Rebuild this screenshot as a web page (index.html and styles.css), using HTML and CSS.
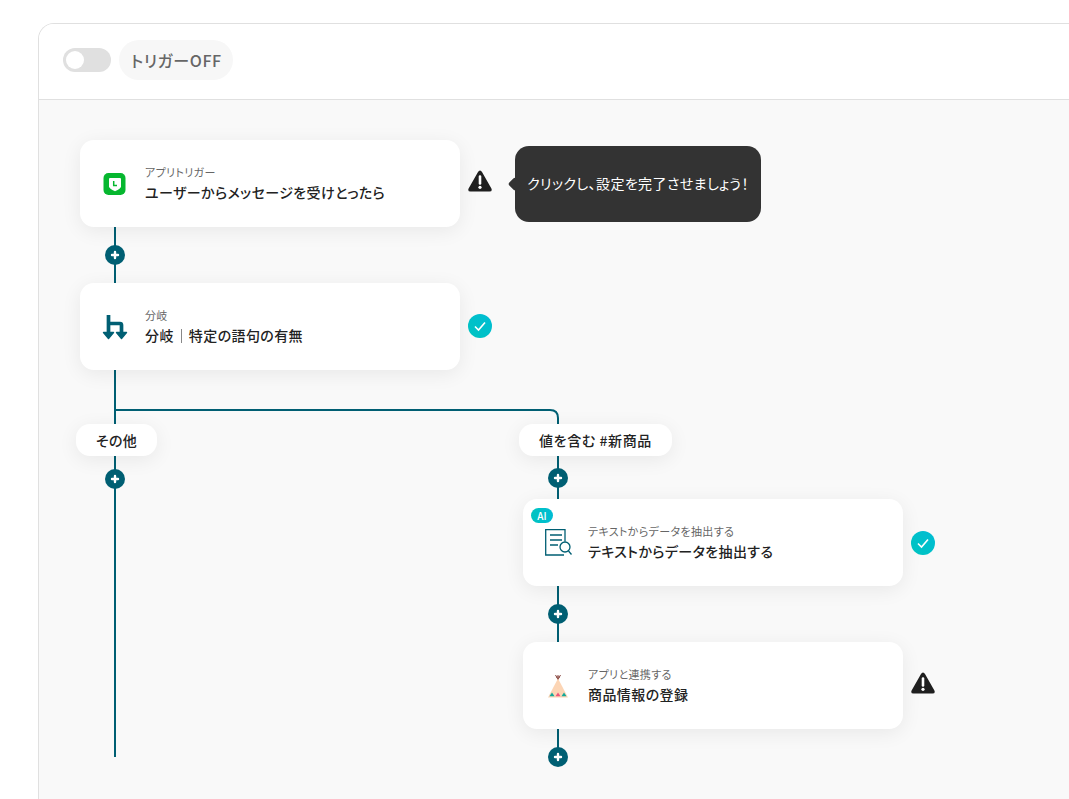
FILE: index.html
```html
<!DOCTYPE html>
<html lang="ja">
<head>
<meta charset="utf-8">
<title>フロー</title>
<link rel="stylesheet" href="styles.css">
</head>
<body>
<main class="panel">
  <header class="panel-head">
    <span class="toggle"><span class="toggle-knob"></span></span>
    <span class="status-pill">トリガーOFF</span>
  </header>
  <section class="canvas">
    <svg class="wires" width="1030" height="699" viewBox="39 100 1030 699" fill="none">
      <defs>
        <g id="plus">
          <circle r="10" fill="#005f73"/>
          <path d="M-3 0H3M0-3V3" stroke="#fff" stroke-width="2.400" stroke-linecap="round"/>
        </g>
        <linearGradient id="checkfill" x1="0" y1="1" x2="1" y2="0">
          <stop offset="0" stop-color="#00c4c0"/>
          <stop offset="1" stop-color="#00bcd4"/>
        </linearGradient>
      </defs>
      <g stroke="#005f73" stroke-width="2">
        <path d="M115 227V757"/>
        <path d="M115 410H550Q558 410 558 418V757"/>
      </g>
      <use href="#plus" x="115" y="255"/>
      <use href="#plus" x="115" y="479"/>
      <use href="#plus" x="558" y="478"/>
      <use href="#plus" x="558" y="614"/>
      <use href="#plus" x="558" y="757"/>
    </svg>

    <article class="card card-line">
      <svg class="card-icon icon-line" width="25" height="25" viewBox="0 0 25 25">
        <rect x="1.500" y="1" width="22" height="22" rx="5" fill="#06b72f"/>
        <path d="M7 7Q7 6 8 6H18Q19 6 19 7V14.500Q19 16.500 13 19.300Q7 16.500 7 14.500Z" fill="#fff"/>
        <path d="M11.700 9V13.600H15" stroke="#06b72f" stroke-width="1.500" fill="none"/>
      </svg>
      <div class="card-text">
        <p class="card-label">アプリトリガー</p>
        <p class="card-title">ユーザーからメッセージを受けとったら</p>
      </div>
    </article>

    <svg class="status status-1" width="24" height="24" viewBox="0 0 24 24">
      <path d="M12 1.500Q13.200 1.500 14 3L23.400 19.500Q24.600 22.500 21.500 22.500H2.500Q-.6 22.500.6 19.500L10 3Q10.800 1.500 12 1.500Z" fill="#1f1f1f"/>
      <path d="M12 7.500V14.500" stroke="#fff" stroke-width="2.600" stroke-linecap="round"/>
      <circle cx="12" cy="18.300" r="1.600" fill="#fff"/>
    </svg>

    <div class="tooltip">クリックし、設定を完了させましょう！</div>

    <article class="card card-branch">
      <svg class="card-icon" width="26" height="28" viewBox="0 0 26 28" fill="none">
        <path d="M6.500 2V19M6.500 10.500H18Q19.500 10.500 19.500 12V19" stroke="#005f73" stroke-width="3.700"/>
        <path d="M1.500 19.500H11.500L6.500 25.500ZM14.500 19.500H24.500L19.500 25.500Z" fill="#005f73" stroke="#005f73" stroke-width="1.400" stroke-linejoin="round"/>
      </svg>
      <div class="card-text">
        <p class="card-label">分岐</p>
        <p class="card-title">分岐<span class="sep"></span>特定の語句の有無</p>
      </div>
    </article>

    <svg class="status status-2" width="24" height="24" viewBox="0 0 24 24" fill="none">
      <circle cx="12" cy="12" r="12" fill="url(#checkfill)"/>
      <path d="M7 12.500L10.500 16L17 8.500" stroke="#fff" stroke-width="1.600"/>
    </svg>

    <div class="pill pill-other">その他</div>
    <div class="pill pill-match">値を含む #新商品</div>

    <article class="card card-ai">
      <span class="ai-badge">AI</span>
      <svg class="card-icon" width="28" height="28" viewBox="0 0 28 28" fill="none" stroke="#005f73" stroke-width="1.300">
        <path d="M20 12.500V.7H.7V26H19"/>
        <path d="M5 6H17M5 11H17M5 16H13"/>
        <circle cx="20" cy="18" r="5" fill="#fff"/>
        <path d="M23.500 22L26.500 25.500"/>
      </svg>
      <div class="card-text">
        <p class="card-label">テキストからデータを抽出する</p>
        <p class="card-title">テキストからデータを抽出する</p>
      </div>
    </article>

    <svg class="status status-3" width="24" height="24" viewBox="0 0 24 24" fill="none">
      <circle cx="12" cy="12" r="12" fill="url(#checkfill)"/>
      <path d="M7 12.500L10.500 16L17 8.500" stroke="#fff" stroke-width="1.600"/>
    </svg>

    <article class="card card-app">
      <svg class="card-icon" width="26" height="28" viewBox="0 0 26 28" fill="none">
        <path d="M10.500 3L13 7.500L15.500 3M13 3V7.500M11 5H15" stroke="#8a4b45" stroke-width="1"/>
        <path d="M13 6.500L23 25.500H3Z" fill="#fcd5b5"/>
        <path d="M4.500 24.300L7 20.500L9.500 24.300Z" fill="#11a99a"/>
        <path d="M10.500 24.300L13 20.500L15.500 24.300Z" fill="#f0567a"/>
        <path d="M16.500 24.300L19 20.500L21.500 24.300Z" fill="#11a99a"/>
      </svg>
      <div class="card-text">
        <p class="card-label">アプリと連携する</p>
        <p class="card-title">商品情報の登録</p>
      </div>
    </article>

    <svg class="status status-4" width="24" height="24" viewBox="0 0 24 24">
      <path d="M12 1.500Q13.200 1.500 14 3L23.400 19.500Q24.600 22.500 21.500 22.500H2.500Q-.6 22.500.6 19.500L10 3Q10.800 1.500 12 1.500Z" fill="#1f1f1f"/>
      <path d="M12 7.500V14.500" stroke="#fff" stroke-width="2.600" stroke-linecap="round"/>
      <circle cx="12" cy="18.300" r="1.600" fill="#fff"/>
    </svg>
  </section>
</main>
</body>
</html>
```

FILE: styles.css
```css
* { box-sizing: border-box; }
html, body { margin: 0; height: 100%; overflow: hidden; background: #fff; }
body {
  font-family: "Noto Sans CJK JP", "Noto Sans", sans-serif;
  font-feature-settings: "palt";
  color: #222;
  padding: 23px 0 0 38px;
}
.panel {
  height: 100%;
  border: solid #e0e0e0;
  border-width: 1px 0 0 1px;
  border-radius: 16px 0 0 0;
  display: flex;
  flex-direction: column;
  overflow: hidden;
}
.panel-head {
  flex: 0 0 76px;
  display: flex;
  align-items: center;
  gap: 8px;
  padding: 0 0 3px 24px;
  background: #fff;
  border-bottom: 1px solid #e0e0e0;
}
.toggle {
  width: 48px;
  height: 24px;
  border-radius: 12px;
  background: #e0e0e0;
  padding: 3px;
}
.toggle-knob {
  display: block;
  width: 18px;
  height: 18px;
  border-radius: 50%;
  background: #fff;
}
.status-pill {
  height: 40px;
  padding: 0 11px 0 12px;
  border-radius: 20px;
  background: #f7f7f7;
  color: #666;
  font-size: 16px;
  font-weight: 500;
  letter-spacing: .57px;
  line-height: 40px;
}
.canvas {
  position: relative;
  flex: 1;
  background: #f9f9f9;
}
.wires { position: absolute; left: 0; top: 0; }
.card {
  position: absolute;
  width: 380px;
  height: 87px;
  display: flex;
  align-items: center;
  background: #fff;
  border-radius: 14px;
  box-shadow: 0 4px 20px rgba(0, 0, 0, .07);
}
.card-line { left: 41px; top: 40px; }
.card-branch { left: 41px; top: 183px; }
.card-ai { left: 484px; top: 399px; }
.card-app { left: 484px; top: 542px; }
.card-icon {
  position: absolute;
  left: 22px;
  top: 30px;
}
.icon-line { top: 32px; }
.card-text { margin-left: 65px; margin-top: -1px; }
.card-label {
  margin: 0 0 2px;
  font-size: 11px;
  line-height: 16px;
  letter-spacing: .36px;
  color: #666;
}
.card-title {
  margin: 0;
  font-size: 14px;
  line-height: 20px;
  font-weight: 500;
  letter-spacing: .4px;
  color: #222;
}
.sep {
  display: inline-block;
  width: 1px;
  height: 14px;
  margin: 0 7px;
  background: #888;
  vertical-align: -2px;
}
.status { position: absolute; }
.status-1 { left: 429px; top: 69px; }
.status-2 { left: 429px; top: 214px; }
.status-3 { left: 872px; top: 431px; }
.status-4 { left: 872px; top: 571px; }
.tooltip {
  position: absolute;
  left: 476px;
  top: 46px;
  width: 246px;
  height: 76px;
  display: flex;
  align-items: center;
  justify-content: center;
  padding-bottom: 2px;
  border-radius: 14px;
  background: #333;
  color: #fff;
  font-size: 14px;
  letter-spacing: .4px;
}
.tooltip::before {
  content: "";
  position: absolute;
  left: -5px;
  top: 33px;
  width: 10px;
  height: 10px;
  background: #333;
  border-radius: 2px;
  transform: rotate(45deg);
}
.pill {
  position: absolute;
  height: 32px;
  display: flex;
  align-items: center;
  justify-content: center;
  border-radius: 14px;
  background: #fff;
  font-size: 14px;
  font-weight: 500;
  letter-spacing: .28px;
  box-shadow: 0 4px 20px rgba(0, 0, 0, .07);
}
.pill-other { left: 37px; top: 324px; width: 81px; }
.pill-match { left: 480px; top: 324px; width: 153px; letter-spacing: .6px; }
.ai-badge {
  position: absolute;
  left: 8px;
  top: 9px;
  width: 22px;
  height: 15px;
  border-radius: 8px;
  background: linear-gradient(90deg, #00c4c0, #00bcd4);
  color: #fff;
  font-size: 10px;
  font-weight: 500;
  line-height: 15px;
  text-align: center;
}
```
